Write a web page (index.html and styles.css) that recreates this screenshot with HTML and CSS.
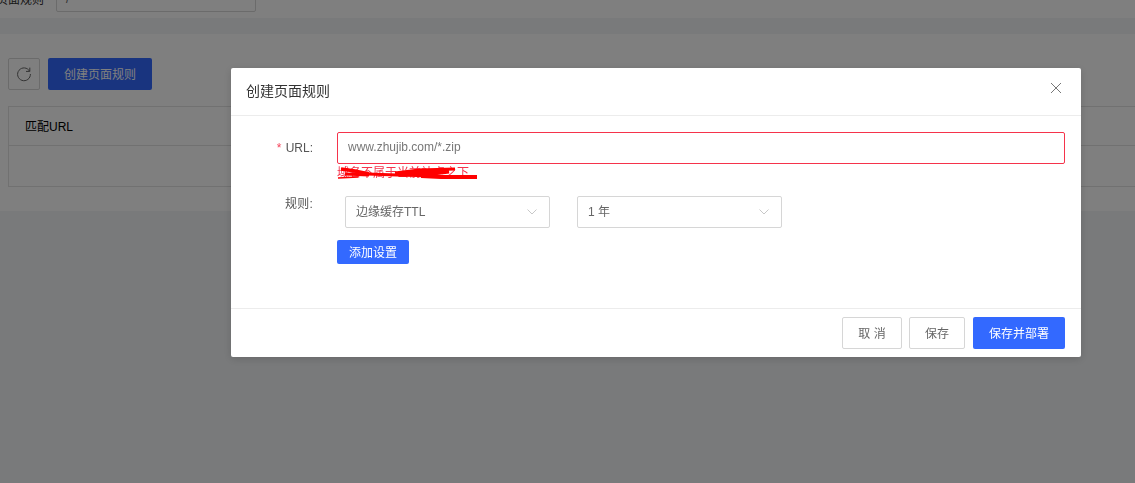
FILE: index.html
```html
<!DOCTYPE html>
<html lang="zh-CN">
<head>
<meta charset="utf-8">
<title>页面规则</title>
<link rel="stylesheet" href="styles.css">
</head>
<body>
<div class="page">
  <div class="top">
    <span class="top-label">页面规则</span>
    <div class="top-input">/</div>
  </div>
  <section class="card">
    <div class="toolbar">
      <button class="btn-refresh" type="button">
        <svg width="16" height="16" viewBox="0 0 16 16" fill="none" stroke="#666" stroke-width="1"><path d="M13.6 5.2A6.4 6.4 0 1 0 14.4 8"/><path d="M13.8 1.6v3.8H10"/></svg>
      </button>
      <button class="btn-create" type="button">创建页面规则</button>
    </div>
    <div class="table">
      <div class="table-head">匹配URL</div>
      <div class="table-row"></div>
    </div>
  </section>
</div>
<div class="overlay"></div>
<div class="modal">
  <header class="modal-head">
    <h2 class="modal-title">创建页面规则</h2>
    <svg class="modal-close" width="10" height="10" viewBox="0 0 10 10" stroke="#777" stroke-width="1" fill="none"><path d="M0 0l10 10M10 0L0 10"/></svg>
  </header>
  <div class="modal-body">
    <div class="field field-url">
      <label class="label"><span class="req">*</span> URL:</label>
      <div class="control">
        <div class="input-url">www.zhujib.com/*.zip</div>
        <div class="error">
          <span>域名不属于当前站点之下</span>
          <svg class="scribble" width="141" height="14" viewBox="0 0 141 14" fill="none" stroke="#f00"><path d="M4 2l14 2 14 3" stroke-width="3.5"/><path d="M8 7l24 1" stroke-width="3"/><path d="M58 6l24-3 36-1" stroke-width="3"/><path d="M62 7l34-1 16-2" stroke-width="5"/><path d="M84 9l20 1 36 0" stroke-width="4"/><path d="M30 7l30 1 40 1" stroke-width="3"/><path d="M1 11l20-1" stroke-width="1.500"/></svg>
        </div>
      </div>
    </div>
    <div class="field field-rule">
      <label class="label">规则:</label>
      <div class="control">
        <div class="selects">
          <div class="select">边缘缓存TTL<svg class="chev" width="10" height="6" viewBox="0 0 10 6" fill="none" stroke="#c8c8c8"><path d="M.5.5L5 5 9.500 .5"/></svg></div>
          <div class="select">1 年<svg class="chev" width="10" height="6" viewBox="0 0 10 6" fill="none" stroke="#c8c8c8"><path d="M.5.5L5 5 9.500 .5"/></svg></div>
        </div>
        <button class="btn-add" type="button">添加设置</button>
      </div>
    </div>
  </div>
  <footer class="modal-foot">
    <button class="btn btn-cancel" type="button">取 消</button>
    <button class="btn btn-save" type="button">保存</button>
    <button class="btn btn-primary" type="button">保存并部署</button>
  </footer>
</div>
</body>
</html>
```
FILE: styles.css
```css
* { box-sizing: border-box; }
html, body { margin: 0; height: 483px; overflow: hidden; }
body {
  background: #f3f4f7;
  font-family: "Liberation Sans", "Noto Sans CJK SC", sans-serif;
  font-size: 12px;
  color: #333;
}
button { font-family: inherit; cursor: pointer; }

.page { height: 483px; }
.top {
  height: 18px;
  background: #fff;
  display: flex;
  align-items: flex-end;
  gap: 12px;
  padding: 0 0 6px 0;
  overflow: hidden;
}
.top-label { width: 44px; flex: none; direction: rtl; white-space: nowrap; line-height: 14px; margin-bottom: 5px; }
.top-input {
  width: 200px;
  height: 32px;
  flex: none;
  border: 1px solid #d6d6d6;
  border-radius: 2px;
  padding: 11px 0 0 9px;
  color: #666;
}
.card {
  margin-top: 16px;
  height: 177px;
  background: #fff;
  padding: 24px 0 0 8px;
  overflow: hidden;
}
.toolbar { display: flex; gap: 8px; }
.btn-refresh {
  width: 32px;
  height: 32px;
  padding: 0;
  display: flex;
  align-items: center;
  justify-content: center;
  background: #fff;
  border: 1px solid #d6d6d6;
  border-radius: 2px;
}
.btn-create {
  width: 104px;
  height: 32px;
  padding: 0 0 2px;
  border: 0;
  border-radius: 2px;
  background: #3369ff;
  color: #fff;
  font-size: 12px;
}
.table {
  margin-top: 16px;
  width: 1140px;
  height: 81px;
  border: 1px solid #e2e2e2;
}
.table-head {
  height: 39px;
  padding-left: 16px;
  line-height: 40px;
  color: #000;
  border-bottom: 1px solid #e2e2e2;
}
.table-row { height: 40px; }

.overlay {
  position: fixed;
  inset: 0;
  background: rgba(0, 0, 0, .5);
}
.modal {
  position: fixed;
  left: 231px;
  top: 68px;
  width: 850px;
  height: 289px;
  background: #fff;
  border-radius: 2px;
  box-shadow: 0 2px 8px rgba(0, 0, 0, .15);
  display: flex;
  flex-direction: column;
}
.modal-head {
  height: 48px;
  flex: none;
  padding: 0 20px 0 15px;
  display: flex;
  align-items: center;
  justify-content: space-between;
  border-bottom: 1px solid #ececec;
}
.modal-title { margin: -2px 0 0; font-size: 14px; font-weight: 400; color: #333; line-height: 20px; }
.modal-close { margin-top: -8px; }
.modal-body { flex: 1; padding-top: 16px; }
.field { display: flex; }
.field-rule { margin-top: 16px; }
.label {
  width: 82px;
  flex: none;
  text-align: right;
  line-height: 32px;
  color: #555;
}
.field-rule .label { line-height: 16px; letter-spacing: .2px; }
.req { color: #f5455c; margin-right: 1px; }
.control { margin-left: 24px; width: 728px; }
.input-url {
  height: 32px;
  border: 1px solid #f5334b;
  border-radius: 2px;
  padding-left: 10px;
  line-height: 28px;
  color: #777;
}
.error {
  position: relative;
  height: 16px;
  line-height: 18px;
  color: #f5334b;
  font-size: 12px;
  white-space: nowrap;
}
.scribble { position: absolute; left: 0; top: 3px; }
.selects { display: flex; gap: 27px; margin-left: 8px; }
.select {
  width: 205px;
  height: 32px;
  border: 1px solid #d6d6d6;
  border-radius: 2px;
  padding: 0 12px 0 10px;
  line-height: 30px;
  color: #666;
  display: flex;
  align-items: center;
  justify-content: space-between;
}
.btn-add {
  display: block;
  margin-top: 12px;
  width: 72px;
  height: 24px;
  padding: 0 0 2px;
  border: 0;
  border-radius: 2px;
  background: #3369ff;
  color: #fff;
  font-size: 12px;
}
.modal-foot {
  height: 49px;
  flex: none;
  border-top: 1px solid #ececec;
  padding: 8px 16px 0 0;
  display: flex;
  justify-content: flex-end;
  gap: 7px;
}
.btn {
  height: 32px;
  padding: 0 0 2px;
  border-radius: 2px;
  background: #fff;
  border: 1px solid #d6d6d6;
  color: #666;
  font-size: 12px;
}
.btn-cancel { width: 60px; }
.btn-save { width: 56px; }
.btn-primary { width: 92px; margin-left: 1px; border: 0; background: #3369ff; color: #fff; }
```
